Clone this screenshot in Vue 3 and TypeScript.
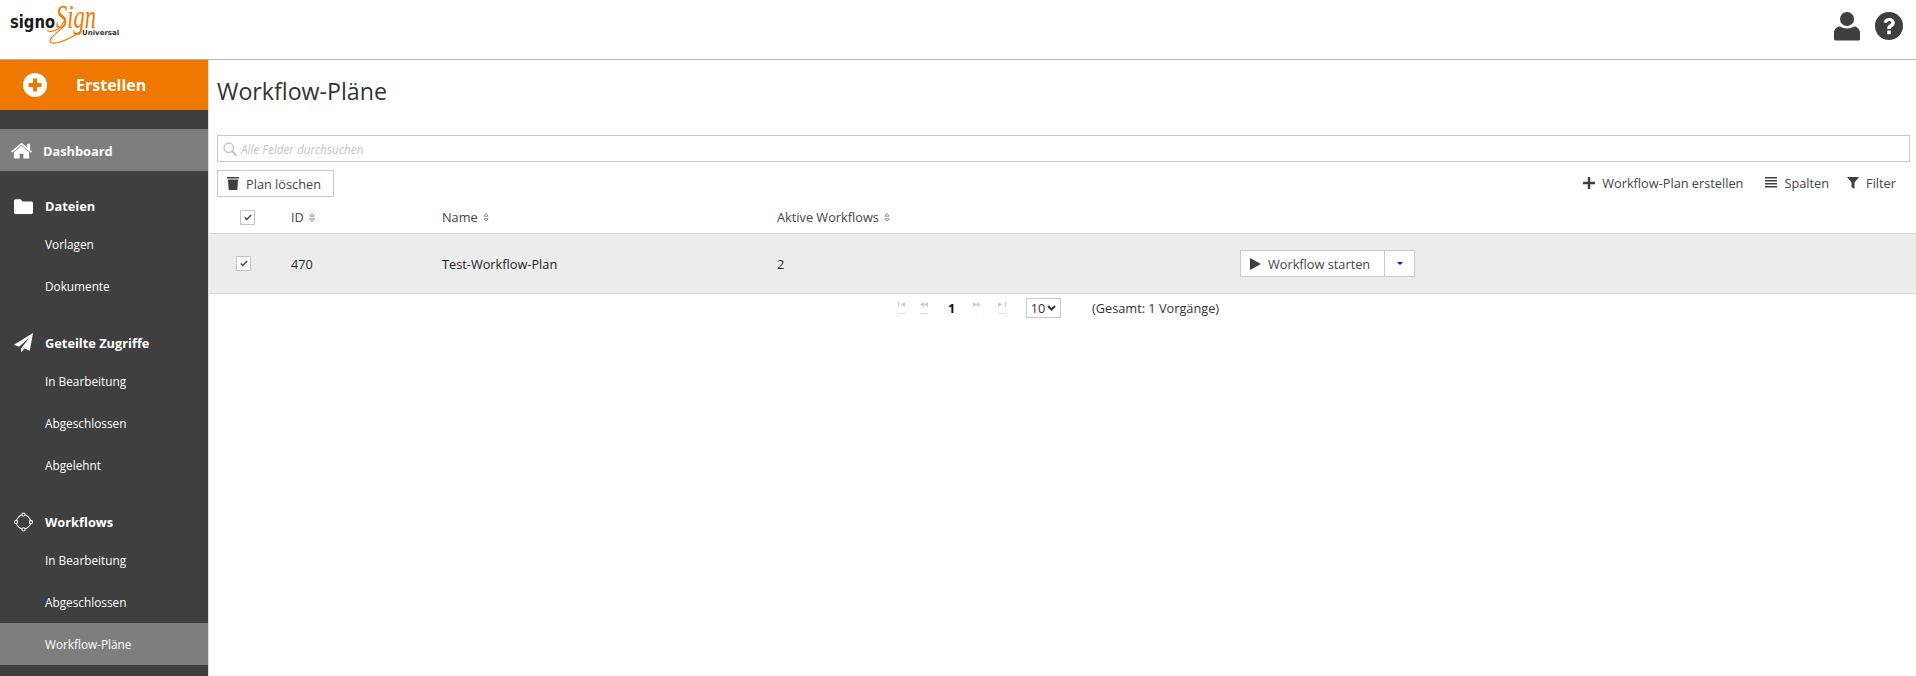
<script setup lang="ts">
const shared = ['In Bearbeitung', 'Abgeschlossen', 'Abgelehnt']
</script>

<template>
  <div class="page">
    <header class="topbar">
      <div class="logo">
        <span class="logo-signo">signo</span>
        <span class="logo-sign">Sign</span>
        <span class="logo-uni">Universal</span>
        <svg class="logo-swoosh" viewBox="0 0 130 50"><path d="M47 31C55 33 61 28 65 20M65 24C60 32 50 36 50 41C50 45 62 44 80 32" fill="none" stroke="#ee7800" stroke-width="1.200" /></svg>
      </div>
      <div class="top-icons">
        <svg class="user" viewBox="0 0 26 29"><circle cx="13" cy="7" r="7" fill="#3f3f3f" /><path d="M0 27v-6c0-4 3-6.500 6-6.500 2 1.300 4.300 2 7 2s5-.7 7-2c3 0 6 2.500 6 6.500v6c0 1-1 1.500-2 1.500H2c-1 0-2-.5-2-1.500z" fill="#3f3f3f" /></svg>
        <svg class="help" viewBox="0 0 28 28"><circle cx="14" cy="14" r="14" fill="#3f3f3f" /><path d="M8.600 10.500C9 7.500 11.200 6 14.200 6c3.200 0 5.600 2 5.600 4.700 0 2.300-1.300 3.300-2.700 4.200-1 .6-1.400 1-1.400 2.100h-3.500c0-2.500.9-3.500 2.300-4.400 1-.6 1.700-1.100 1.700-2 0-1-.9-1.600-2-1.600-1.200 0-2 .7-2.300 2z" fill="#fff" /><rect x="12.200" y="18.600" width="3.600" height="3.600" rx=".5" fill="#fff" /></svg>
      </div>
    </header>

    <div class="body">
      <aside class="sidebar">
        <div class="create">
          <svg class="create-icon" viewBox="0 0 24 24"><circle cx="12" cy="12" r="12" fill="#fff" /><path d="M10 5.500h4V10h4.500v4H14v4.500h-4V14H5.500v-4H10z" fill="#ee7800" /></svg>
          <span>Erstellen</span>
        </div>
        <div class="dash">
          <svg class="home" viewBox="0 0 22 17"><path d="M11 3.500 3 10v6c0 .5.300.8.800.8H9v-5h4v5h5.200c.5 0 .8-.3.800-.8v-6z" fill="#fff" /><path d="M0 9.500 11 .5l6 4.900V1.500h3v6.400l2 1.600-1.100 1.300L11 2.600 1.100 10.800z" fill="#fff" /></svg>
          <span>Dashboard</span>
        </div>

        <div class="group g-files">
          <svg class="gi" viewBox="0 0 19 15"><path d="M0 2C0 1 .8.300 1.700.3h5L8.500 2.500h9c.8 0 1.500.7 1.500 1.500v9.500c0 .8-.7 1.500-1.500 1.500h-16C.7 15 0 14.300 0 13.500z" fill="#fff" /></svg>
          <span>Dateien</span>
        </div>
        <div class="item">Vorlagen</div>
        <div class="item">Dokumente</div>

        <div class="group g-shared">
          <svg class="gi tall" viewBox="0 0 19 20"><path d="M19 0 15.800 17.800 10.300 15.500 7.200 19.500V15.300L15.500 4.500 5 13.800 0 11.700z" fill="#fff" /></svg>
          <span>Geteilte Zugriffe</span>
        </div>
        <div v-for="s in shared" :key="s" class="item">{{ s }}</div>

        <div class="group g-flows">
          <svg class="gi tall" viewBox="0 0 20 20"><path d="M10 2.200C14 2.600 17.400 6 17.800 10C17.400 14 14 17.400 10 17.800C6 17.400 2.600 14 2.200 10C2.600 6 6 2.600 10 2.200z" fill="none" stroke="#fff" stroke-width="1.100" /><g fill="#3f3f3f" stroke="#fff" stroke-width="1.100"><circle cx="10" cy="2.200" r="1.700" /><circle cx="10" cy="17.800" r="1.700" /><circle cx="2.200" cy="10" r="1.700" /><circle cx="17.800" cy="10" r="1.700" /></g></svg>
          <span>Workflows</span>
        </div>
        <div class="item">In Bearbeitung</div>
        <div class="item">Abgeschlossen</div>
        <div class="item active">Workflow-Pläne</div>
      </aside>

      <main class="main">
        <h1>Workflow-Pläne</h1>
        <div class="search">
          <svg class="search-icon" viewBox="0 0 14 14"><circle cx="5.700" cy="5.700" r="4.700" fill="none" stroke="#c4c4c4" stroke-width="1.400" /><path d="M9.200 9.200 13 13" stroke="#c4c4c4" stroke-width="2" stroke-linecap="round" /></svg>
          <span>Alle Felder durchsuchen</span>
        </div>
        <div class="tools">
          <button class="btn delete">
            <svg class="trash" viewBox="0 0 12 13"><path d="M0 0h12v1.500H0zM1 2.500h10l-.6 9.500c0 .6-.4 1-1 1H2.600c-.6 0-1-.4-1-1z" fill="#3f3f3f" /></svg>
            Plan löschen
          </button>
          <div class="actions">
            <span class="act act-create"><svg class="ic-plus" viewBox="0 0 12 12"><path d="M4.800 0h2.400v4.800H12v2.400H7.200V12H4.800V7.200H0V4.800h4.800z" fill="#3f3f3f" /></svg>Workflow-Plan erstellen</span>
            <span class="act"><svg class="ic-bars" viewBox="0 0 12 11"><path d="M0 0h12v1.500H0zM0 3h12v1.500H0zM0 6h12v1.500H0zM0 9h12v1.500H0z" fill="#3f3f3f" /></svg>Spalten</span>
            <span class="act"><svg class="ic-filter" viewBox="0 0 12 12"><path d="M0 0h12L7.500 5.500V12L4.500 10V5.500z" fill="#3f3f3f" /></svg>Filter</span>
          </div>
        </div>

        <div class="grid head">
          <div><span class="check head-check"><svg viewBox="0 0 10 8"><path d="M1 4l2.500 2.500L9 1" fill="none" stroke="#444" stroke-width="1.800" /></svg></span></div>
          <div>ID<svg class="sort" viewBox="0 0 7 10"><path d="M3.500 .5 6 3.500H1zM3.500 9.500 1 6.500h5z" fill="none" stroke="#777" stroke-width=".9" /></svg></div>
          <div>Name<svg class="sort" viewBox="0 0 7 10"><path d="M3.500 .5 6 3.500H1zM3.500 9.500 1 6.500h5z" fill="none" stroke="#777" stroke-width=".9" /></svg></div>
          <div>Aktive Workflows<svg class="sort" viewBox="0 0 7 10"><path d="M3.500 .5 6 3.500H1zM3.500 9.500 1 6.500h5z" fill="none" stroke="#777" stroke-width=".9" /></svg></div>
          <div></div>
        </div>
        <div class="grid row">
          <div><span class="check"><svg viewBox="0 0 10 8"><path d="M1 4l2.500 2.500L9 1" fill="none" stroke="#444" stroke-width="1.800" /></svg></span></div>
          <div>470</div>
          <div>Test-Workflow-Plan</div>
          <div>2</div>
          <div class="split">
            <button class="btn start"><svg class="play" viewBox="0 0 11 12"><path d="M0 0 11 6 0 12z" fill="#3f3f3f" /></svg>Workflow starten</button>
            <button class="btn caret"><i></i></button>
          </div>
        </div>

        <div class="pager">
          <span class="pg"><svg viewBox="0 0 8 5"><path d="M0 0h1v5H0zM7 0v5L2.500 2.500z" fill="#ccc" /></svg><b></b></span>
          <span class="pg"><svg viewBox="0 0 8 5"><path d="M4 0v5L0 2.500zM8 0v5L4 2.500z" fill="#ccc" /></svg><b></b></span>
          <strong>1</strong>
          <span class="pg"><svg viewBox="0 0 8 5"><path d="M0 0v5l4-2.500zM4 0v5l4-2.500z" fill="#ccc" /></svg><b class="dot"></b></span>
          <span class="pg last"><svg viewBox="0 0 8 5"><path d="M0 0v5l4.500-2.500zM7 0h1v5H7z" fill="#ccc" /></svg><b></b></span>
          <span class="size">10<svg viewBox="0 0 9 6"><path d="M1 1l3.500 3.500L8 1" fill="none" stroke="#333" stroke-width="2" /></svg></span>
          <span class="total">(Gesamt: 1 Vorgänge)</span>
        </div>
      </main>
    </div>
  </div>
</template>

<style>
html, body { margin: 0; background: #fff; }
</style>

<style scoped>
.page { width: 1916px; height: 676px; overflow: hidden; font-family: "Open Sans", "Liberation Sans", sans-serif; font-size: 12.750px; color: #333; display: flex; flex-direction: column; }
.topbar { height: 59px; border-bottom: 1px solid #b5b5b5; display: flex; justify-content: space-between; align-items: flex-start; flex: none; }
.logo { position: relative; width: 130px; height: 50px; }
.logo-signo { position: absolute; left: 10px; top: 10px; font: bold 18px/24px "DejaVu Sans", sans-serif; color: #1a1a1a; transform: scaleX(.82); transform-origin: left; }
.logo-sign { position: absolute; left: 56px; top: 5px; font: italic 33px/25px "Liberation Serif", serif; color: #ee7800; transform: scaleX(.68); transform-origin: left; }
.logo-uni { position: absolute; left: 82px; top: 30px; font: bold 7px/7px "DejaVu Sans", sans-serif; color: #333; }
.logo-swoosh { position: absolute; left: 0; top: 0; width: 130px; height: 50px; }
.top-icons { display: flex; align-items: flex-start; gap: 15px; margin: 12px 13px 0 0; }
.user { width: 26px; height: 29px; }
.help { width: 28px; height: 28px; }
.body { flex: 1; display: flex; min-height: 0; }
.sidebar { width: 208px; flex: none; background: #3f3f3f; color: #fff; border-right: 1px solid #ddd; font-size: 12.800px; }
.create { height: 50px; background: #ee7800; display: flex; align-items: center; font-size: 16px; font-weight: 700; }
.create-icon { width: 24px; height: 24px; margin: 0 29px 0 23px; }
.dash { height: 42px; margin-top: 19px; background: #7e7e7e; display: flex; align-items: center; font-weight: 700; }
.dash span { position: relative; top: 1px; }
.home { width: 21px; height: 17px; margin: 0 11px 0 11px; }
.group { height: 34px; display: flex; align-items: center; font-weight: 700; }
.g-files { margin-top: 18px; }
.g-shared { margin-top: 19px; }
.g-flows { margin-top: 19px; }
.gi { width: 19px; height: 15px; margin: 0 12px 0 14px; flex: none; }
.gi.tall { height: 20px; }
.item { height: 42px; display: flex; align-items: center; padding-left: 45px; font-size: 11.800px; }
.active { background: #7e7e7e; }
.main { flex: 1; min-width: 0; }
h1 { margin: 15px 0 0 8px; font-size: 23.200px; font-weight: 400; line-height: 33px; color: #333; }
.search { height: 25px; margin: 27px 6px 0 8px; border: 1px solid #c8c8c8; display: flex; align-items: center; font-size: 11.700px; font-style: italic; color: #c4c4c4; }
.search-icon { width: 14px; height: 14px; margin: 0 4px 0 5px; }
.tools { display: flex; justify-content: space-between; align-items: center; margin: 8px 20px 0 8px; }
.btn { font-family: inherit; font-size: 12.750px; color: #444; background: #fff; border: 1px solid #c8c8c8; display: inline-flex; align-items: center; padding: 0; height: 27px; }
.delete { width: 117px; padding-left: 9px; }
.trash { width: 12px; height: 13px; margin-right: 7px; }
.actions { display: flex; gap: 18px; color: #444; margin-bottom: 2px; }
.act { display: flex; align-items: center; }
.act-create { margin-right: 4px; }
.act svg { margin-right: 7px; }
.ic-plus { width: 12px; height: 12px; }
.ic-bars { width: 12px; height: 11px; }
.ic-filter { width: 12px; height: 12px; }
.grid { display: grid; grid-template-columns: 82px 151px 335px 463px 1fr; align-items: center; }
.head { height: 33px; padding-top: 3px; color: #444; border-bottom: 1px solid #d4d4d4; }
.row { height: 59px; background: #ececec; border-bottom: 1px solid #d9d9d9; color: #222; }
.check { display: flex; align-items: center; justify-content: center; width: 13px; height: 13px; margin-left: 27px; background: #fff; border: 1px solid #c4c4c4; }
.head-check { margin-left: 31px; margin-top: 1px; }
.check svg { width: 8px; height: 7px; }
.sort { width: 6px; height: 9px; margin-left: 5px; }
.split { display: flex; }
.start { width: 145px; padding-left: 9px; }
.play { width: 11px; height: 12px; margin-right: 7px; }
.caret { width: 31px; margin-left: -1px; justify-content: center; }
.caret i { width: 0; height: 0; border: 3.500px solid transparent; border-top: 3.500px solid #1212c0; border-bottom: 0; }
.pager { height: 28px; display: flex; align-items: center; margin-left: 689px; color: #333; }
.pg { width: 8px; display: flex; flex-direction: column; margin-right: 14px; }
.pg svg { width: 8px; height: 5px; margin-bottom: 6px; }
.pg b { height: 1px; background: #ddd; width: 8px; }
.pg b.dot { width: 1px; margin-left: 3px; }
.pager strong { width: 5px; margin: 0 20px 0 6px; color: #111; }
.pg.last { margin: 0 20px 0 3px; }
.size { box-sizing: border-box; width: 35px; height: 20px; border: 1px solid #c8c8c8; display: flex; align-items: center; justify-content: center; gap: 2px; color: #333; }
.size svg { width: 9px; height: 6px; }
.total { margin-left: 31px; }
</style>
